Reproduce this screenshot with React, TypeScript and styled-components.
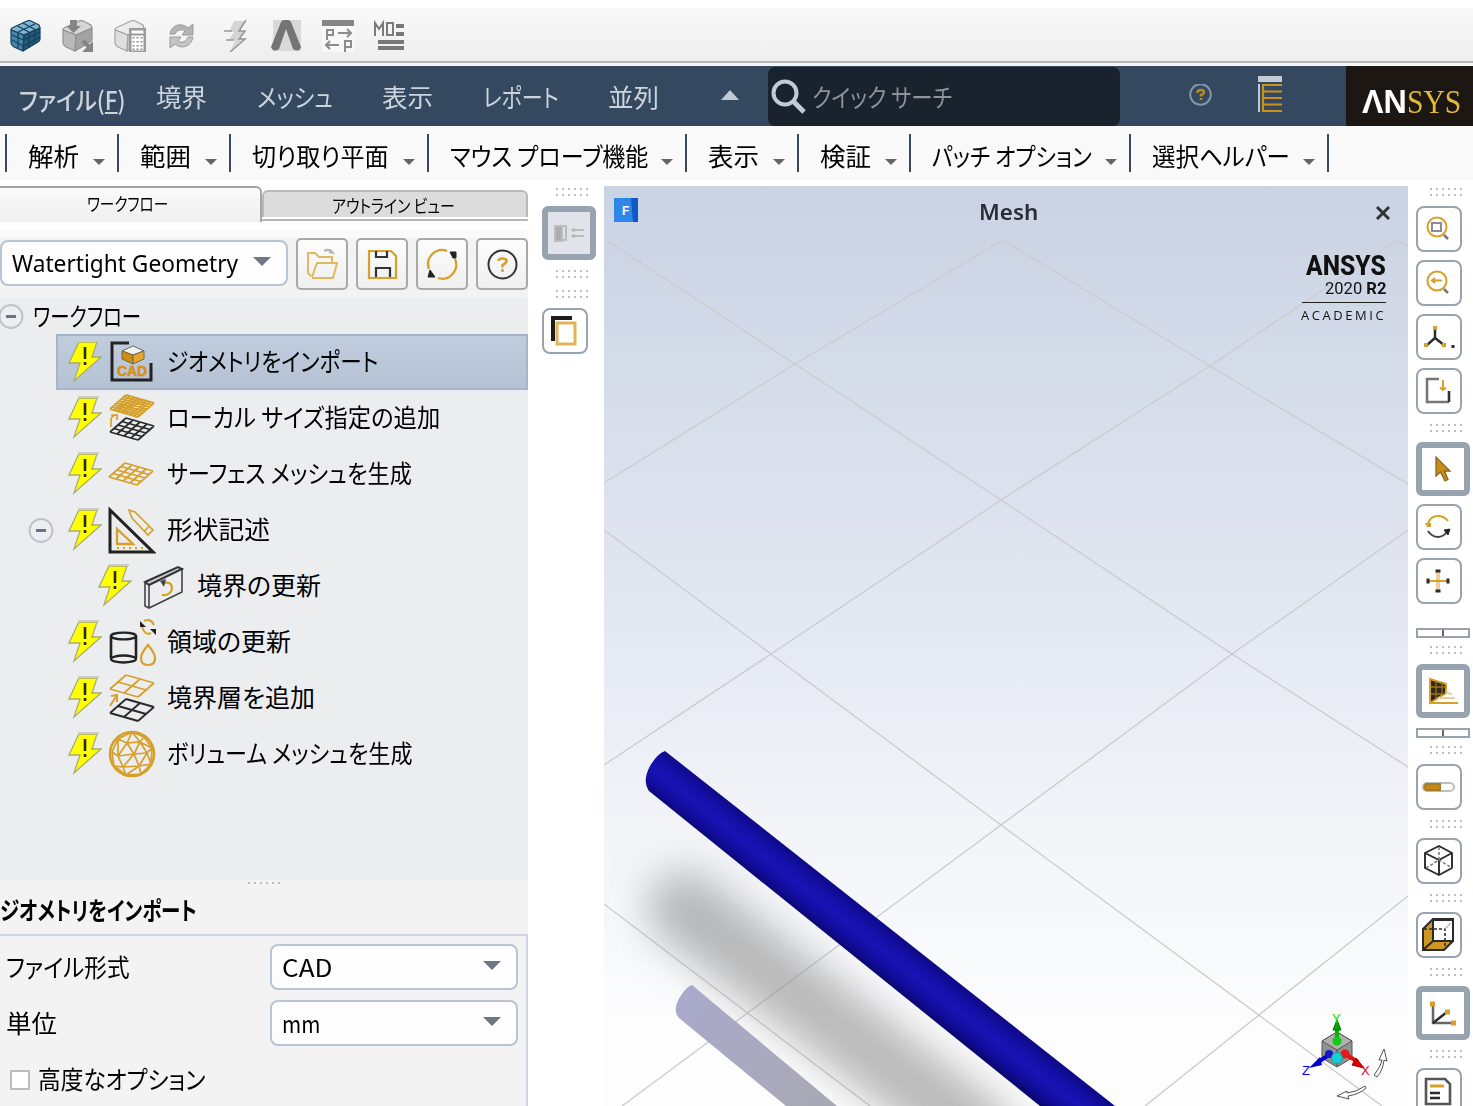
import React, { useLayoutEffect, useRef, useState } from "react";
import styled, { createGlobalStyle } from "styled-components";

const GOLD = "#d6a02a";
const INK = "#2b2b2b";

const GlobalStyle = createGlobalStyle`
  * { box-sizing: border-box; }
  body { margin: 0; background: #fff; overflow: hidden; }
`;

const Window = styled.div`
  width: 1473px;
  height: 1106px;
  overflow: hidden;
  display: flex;
  flex-direction: column;
  background: #fff;
  color: #000;
  font-family: "Noto Sans", "Noto Sans CJK JP", sans-serif;
  font-size: 25px;
`;

/* Text squeezed or stretched to a fixed advance width */
const FitBox = styled.span<{ $w: number; $size: number; $lh: number; $color?: string; $weight?: number; $font?: string; $gap?: number; $dy?: number; $spacing?: number }>`
  display: block;
  flex: none;
  width: ${p => p.$w}px;
  height: ${p => Math.round(p.$size * p.$lh)}px;
  line-height: ${p => Math.round(p.$size * p.$lh)}px;
  margin-left: ${p => p.$gap ?? 0}px;
  margin-top: ${p => p.$dy ?? 0}px;
  font-size: ${p => p.$size}px;
  font-weight: ${p => p.$weight ?? 400};
  font-family: ${p => p.$font ?? '"Noto Sans CJK JP", sans-serif'};
  font-feature-settings: "palt";
  letter-spacing: ${p => p.$spacing ?? 0}px;
  color: ${p => p.$color ?? "inherit"};
  white-space: nowrap;
`;
const FitInner = styled.span`
  display: inline-block;
  vertical-align: top;
  transform-origin: 0 50%;
`;

type FitProps = { children: React.ReactNode; w: number; size?: number; lh?: number; color?: string; weight?: number; font?: string; gap?: number; dy?: number; spacing?: number };
function Fit({ children, w, size = 25, lh = 1.3, color, weight, font, gap, dy, spacing }: FitProps) {
  const ref = useRef<HTMLSpanElement>(null);
  const [k, setK] = useState(1);
  useLayoutEffect(() => {
    if (ref.current) setK(w / ref.current.offsetWidth);
  }, [w]);
  return (
    <FitBox $w={w} $size={size} $lh={lh} $color={color} $weight={weight} $font={font} $gap={gap} $dy={dy} $spacing={spacing}>
      <FitInner ref={ref} style={{ transform: `scaleX(${k})` }}>{children}</FitInner>
    </FitBox>
  );
}

/* ---------- top tool bar ---------- */
const IconBar = styled.header`
  flex: none;
  height: 58px;
  margin-top: 8px;
  padding: 12px 0 0 10px;
  display: flex;
  gap: 20px;
  background: linear-gradient(#f9f9f9, #eeeeee 53px, #b5b5b5 53px, #b5b5b5 55px, #f4f6f5 55px);
`;
const Svg = styled.svg`
  display: block;
  flex: none;
`;

const CubeShape = ({ a, b, c, s }: { a: string; b: string; c: string; s: string }) => (
  <g stroke={s} strokeWidth="1.2" strokeLinejoin="round">
    <path d="M1 10 Q1 8 4 7 L17 1 Q19 0 21 1 L29 5 L30 8 L14 15 Z" fill={a} />
    <path d="M1 10 L14 15 L13 31 L4 27 Q1 25 1 23 Z" fill={b} />
    <path d="M14 15 L30 8 V19 Q30 21 28 22 L13 31 Z" fill={c} />
  </g>
);

function TopIcons() {
  return (
    <IconBar>
      <Svg width="32" height="32" viewBox="0 0 32 32">
        <CubeShape a="#7db4d4" b="#4586aa" c="#225a7c" s="#173f58" />
        <path d="M7.5 6 L19 12 M13 3 L25 9.5 M8 12 L8 28 M2 15 L13.5 20 M2 20 L13.5 26 M19 12 V27 M25 9.5 V24 M14 20 L30 12 M14 26 L30 17 M8 12 L25 4" stroke="#173f58" strokeWidth="1.2" fill="none" />
      </Svg>
      <Svg width="32" height="32" viewBox="0 0 32 32">
        <CubeShape a="#d6d6d6" b="#b9b9b9" c="#a2a2a2" s="#929292" />
        <path d="M8 0 h7 v6 h4 l-7.5 7 l-7 -7 h3.500 Z" fill="#858585" />
        <path d="M21 21 L28 28" stroke="#858585" strokeWidth="4" />
        <path d="M31 21 V32 H20 Z" fill="#858585" />
      </Svg>
      <Svg width="32" height="32" viewBox="0 0 32 32">
        <CubeShape a="#ececec" b="#dedede" c="#c4c4c4" s="#a3a3a3" />
        <rect x="15" y="8" width="17" height="24" fill="#9a9a9a" />
        <rect x="17.500" y="10.500" width="12" height="3" fill="#fff" />
        <rect x="17.500" y="15.500" width="12" height="15" fill="#fff" />
        <g fill="#8c8c8c">
          {[17, 21, 25, 28.5].map(y => [18.500, 22.500, 26.500].map(x => <rect key={`${x}-${y}`} x={x} y={y} width="2" height="1.500" />))}
        </g>
      </Svg>
      <Svg width="32" height="32" viewBox="0 0 32 32">
        <path d="M4 14 C6 3 17 3 22 8 L27 4 V15 H16 L19 11 C14 8 11 11 9 14 Z" fill="#b4b4b4" stroke="#9c9c9c" />
        <path d="M27 17 C25 28 14 29 9 24 L4 28 V17 H15 L12 21 C17 24 20 21 22 17 Z" fill="#c4c4c4" stroke="#9c9c9c" />
      </Svg>
      <Svg width="32" height="32" viewBox="0 0 32 32">
        <path d="M16 1 H27 L21 11 H27 L20 18 H26 L13 31 L17 20 H11 L16 12 H11 Z" fill="#d4d4d4" />
        <path d="M28 0 L21 11 H27 L21 19 H27 L12 32 M6 11 h8 M8 20 h8" stroke="#999" strokeWidth="1.600" fill="none" />
      </Svg>
      <Svg width="32" height="32" viewBox="0 0 32 32">
        <rect x="3" y="0" width="28" height="31" fill="#d9d9d9" />
        <path d="M1 27 L11 2 Q12 0 14 0 H18 Q20 0 21 2 L31 27 Q29 33 23 29 L16 9 L9 29 Q3 33 1 27 Z" fill="#747474" />
      </Svg>
      <Svg width="32" height="32" viewBox="0 0 32 32">
        <rect x="0" y="0" width="32" height="32" fill="#f8f8f8" />
        <rect x="0" y="0" width="32" height="6" fill="#858585" />
        <path d="M5 20 V10 H11 V15 H5 M16 13 H29 M25 9 L29 13 L25 17 M17 25 H4 M8 21 L4 25 L8 29 M23 32 V21 H29 V27 H23" stroke="#8c8c8c" strokeWidth="2" fill="none" />
      </Svg>
      <Svg width="32" height="32" viewBox="0 0 32 32">
        <path d="M1 16 V3 L5 9 L9 3 V16 M13 3 H19 V15 H13 Z" stroke="#7b7b7b" strokeWidth="2" fill="none" />
        <path d="M22 4 h8 v4 h-8 z M22 12 h8 v4 h-8 z M4 20 h26 v4 h-26 z M4 26 h26 v4 h-26 z" fill="#777" />
      </Svg>
    </IconBar>
  );
}

/* ---------- menu bar ---------- */
const MenuBar = styled.nav`
  flex: none;
  height: 60px;
  display: flex;
  align-items: center;
  background: #34495f;
  color: #cdd4dd;
`;
const Up = styled.i`
  flex: none;
  margin-left: 62px;
  margin-top: -2px;
  border: 9px solid transparent;
  border-top: 0;
  border-bottom: 10px solid #c1cbd8;
`;
const Search = styled.div`
  flex: none;
  width: 352px;
  height: 59px;
  margin-left: 29px;
  padding-left: 3px;
  display: flex;
  align-items: center;
  border-radius: 7px;
  background: #19232d;
`;
const MenuIcon = styled.div<{ $gap: number }>`
  margin-left: ${p => p.$gap}px;
`;
const Brand = styled.div`
  margin-left: auto;
  width: 127px;
  height: 60px;
  padding: 11px 0 0 16px;
  display: flex;
  align-items: center;
  background: #1c1713;
`;

function Menu() {
  return (
    <MenuBar>
      <Fit w={107} gap={19} dy={6} weight={500}>ファイル(<u>F</u>)</Fit>
      <Fit w={51} gap={30}>境界</Fit>
      <Fit w={76} gap={50}>メッシュ</Fit>
      <Fit w={51} gap={49}>表示</Fit>
      <Fit w={76} gap={50}>レポート</Fit>
      <Fit w={51} gap={49}>並列</Fit>
      <Up />
      <Search>
        <Svg width="36" height="36" viewBox="0 0 36 36">
          <circle cx="14" cy="15" r="11.500" fill="none" stroke="#c1cbd8" strokeWidth="4" />
          <path d="M22 23 L33 34" stroke="#c1cbd8" strokeWidth="5" />
        </Svg>
        <Fit w={140} gap={5} color="#8f9398">クイック サーチ</Fit>
      </Search>
      <MenuIcon $gap={69}>
        <Svg width="23" height="24" viewBox="0 0 23 24">
          <circle cx="11.500" cy="10.500" r="10.300" fill="none" stroke="#8294a8" strokeWidth="2" />
          <path d="M8.500 9 Q8.500 6 11.500 6 Q15 6 15 8.500 Q14.500 10.500 12 11 V12.500 M12 14 v2" stroke="#b78b26" strokeWidth="2.500" fill="none" />
        </Svg>
      </MenuIcon>
      <MenuIcon $gap={46}>
        <Svg width="25" height="40" viewBox="0 0 25 40">
          <path d="M0 0 H24 V6 H0 Z M0 8 H2 V36 H0 Z" fill="#c1cbd8" />
          <path d="M24 9 H5 V35 H24 M5 15.500 H24 M5 22 H24 M5 28.500 H24" stroke="#cb9216" strokeWidth="2.200" fill="none" />
        </Svg>
      </MenuIcon>
      <Brand>
        <Fit w={45} size={33} weight={700} color="#fff" font='"Liberation Sans", sans-serif'>ΛN</Fit>
        <Fit w={54} size={34} color="#e2b93a" font='"Liberation Serif", serif'>SYS</Fit>
      </Brand>
    </MenuBar>
  );
}

const SubBar = styled.div`
  flex: none;
  height: 54px;
  padding: 8px 0 0 5px;
  display: flex;
  background: #f9f9f9;
`;
const SubItem = styled.div<{ $w: number }>`
  width: ${p => p.$w}px;
  height: 38px;
  padding: 0 12px 0 21px;
  display: flex;
  align-items: center;
  justify-content: space-between;
  border-left: 2px solid #3a4a5c;
`;
const SubEnd = styled.div`
  width: 2px;
  height: 38px;
  background: #3a4a5c;
`;
const Down = styled.i<{ $big?: boolean }>`
  flex: none;
  margin-top: ${p => (p.$big ? 0 : 18)}px;
  border: ${p => (p.$big ? 9 : 6)}px solid transparent;
  border-bottom: 0;
  border-top: ${p => (p.$big ? "9px solid #6e7783" : "6px solid #666")};
`;
const subItems: [string, number, number][] = [
  ["解析", 112, 51], ["範囲", 112, 51], ["切り取り平面", 198, 137], ["マウス プローブ機能", 258, 198],
  ["表示", 112, 51], ["検証", 112, 51], ["パッチ オプション", 220, 160], ["選択ヘルパー", 198, 138],
];

/* ---------- left panel ---------- */
const Body = styled.main`
  flex: 1;
  min-height: 0;
  display: flex;
`;
const Left = styled.section`
  flex: none;
  width: 528px;
  display: flex;
  flex-direction: column;
`;
const Tabs = styled.div`
  height: 50px;
  padding-top: 6px;
  display: flex;
  align-items: flex-start;
`;
const Tab = styled.div<{ $on?: boolean }>`
  width: ${p => (p.$on ? 262 : 266)}px;
  height: ${p => (p.$on ? 36 : 27)}px;
  margin-top: ${p => (p.$on ? 0 : 4)}px;
  border: solid ${p => (p.$on ? "#a5a5a5" : "#b9b9b9")};
  border-width: ${p => (p.$on ? "2px 2px 0 0" : "2px 2px 0 2px")};
  border-radius: ${p => (p.$on ? "0 6px 0 0" : "6px 6px 0 0")};
  background: ${p => (p.$on ? "linear-gradient(#fafafa,#efefef)" : "#dcdcdc")};
  box-shadow: ${p => (p.$on ? "none" : "0 2px #fff, 0 4px #b5b5b5")};
  padding-left: ${p => (p.$on ? 87 : 68)}px;
  display: flex;
  align-items: center;
`;
const Tools = styled.div`
  height: 68px;
  padding-top: 8px;
  display: flex;
  align-items: flex-start;
  background: linear-gradient(#fafafa 8px, #f3f3f3 8px);
`;
const Combo = styled.div<{ $w: number }>`
  flex: none;
  width: ${p => p.$w}px;
  height: 46px;
  padding: 0 15px 3px 10px;
  display: flex;
  align-items: center;
  justify-content: space-between;
  border: 2px solid #b8c4d4;
  border-radius: 8px;
  background: #fdfdfd;
`;
const ToolCombo = styled.div`
  margin-top: 2px;
`;
const ToolButton = styled.div`
  width: 52px;
  height: 52px;
  margin-left: 8px;
  display: flex;
  align-items: center;
  justify-content: center;
  border: 2px solid #a9a9a9;
  border-radius: 5px;
  background: linear-gradient(#fdfdfd, #efefef);
`;
const Tree = styled.div`
  height: 582px;
  background: #ecedef;
`;
const Root = styled.div`
  height: 36px;
  margin-left: -2px;
  display: flex;
  align-items: center;
`;
const Row = styled.div<{ $on?: boolean; $indent?: number }>`
  height: 56px;
  margin-left: ${p => (p.$on ? 56 : 0)}px;
  padding-left: ${p => (p.$on ? 10 : 28 + (p.$indent ?? 0))}px;
  display: flex;
  align-items: center;
  border: ${p => (p.$on ? "2px solid #a5b4c6" : "0")};
  background: ${p => (p.$on ? "linear-gradient(#c0cddd,#b4c2d4)" : "none")};
`;
const Fold = styled.span<{ $show: boolean }>`
  flex: none;
  width: 26px;
  height: 26px;
  margin-right: 14px;
  visibility: ${p => (p.$show ? "visible" : "hidden")};
`;

const FoldIcon = ({ show = true }: { show?: boolean }) => (
  <Fold $show={show}>
    <Svg width="26" height="26" viewBox="0 0 26 26">
      <circle cx="13" cy="13.500" r="11.500" fill="#eceef0" stroke="#bcc3cc" strokeWidth="2" />
      <path d="M8 13.500 H18" stroke="#64758a" strokeWidth="3" />
    </Svg>
  </Fold>
);
const Bolt = () => (
  <Svg width="34" height="44" viewBox="0 0 34 44">
    <path d="M11 2 H29 L24 17 H33 L6 41 L12 23 H1 Z" fill="#ff0" stroke="#a9ad6c" strokeWidth="1.300" />
    <path d="M10.500 1 H31" stroke="#c9ccc9" strokeWidth="2" />
    <path d="M17 7 V19 M17 22 v3" stroke="#2a2a10" strokeWidth="2.600" />
  </Svg>
);

const Sheet = ({ y, n, c, w = 1.5 }: { y: number; n: number; c: string; w?: number }) => {
  const lines = [];
  for (let i = 0; i <= n; i++) {
    const t = i / n;
    lines.push(`M${18 - 16 * t} ${y + 14 * t} L${46 - 16 * t} ${y + 8 + 14 * t}`);
    lines.push(`M${18 + 28 * t} ${y + 8 * t} L${2 + 28 * t} ${y + 14 + 8 * t}`);
  }
  return <path d={lines.join(" ")} stroke={c} strokeWidth={w} fill="none" />;
};

const rowIcons: Record<string, React.ReactNode> = {
  cad: (
    <>
      <path d="M21 6 H4 V43 H43 V26" stroke="#222" strokeWidth="3" fill="none" />
      <path d="M14 14 L25 9 L36 14 L25 18 Z" fill="#f2f2f2" stroke="#666" />
      <path d="M14 14 L25 18 V27 L14 22 Z" fill="#d08d12" stroke="#7b6844" />
      <path d="M25 18 L36 14 V22 L25 27 Z" fill="#e3a72d" stroke="#7b6844" />
      <text x="9" y="39" fontFamily="Liberation Sans" fontWeight="700" fontSize="14" textLength="30" fill="#d69114" stroke="#d69114" strokeWidth=".5">CAD</text>
    </>
  ),
  local: (
    <>
      <Sheet y={2} n={7} c={GOLD} w={1.9} />
      <Sheet y={25} n={4} c={INK} w={1.8} />
      <path d="M3 34 V27 Q3 23 8 22 M3 22 h6 v5" stroke={GOLD} strokeWidth="1.700" fill="none" />
    </>
  ),
  surface: <g transform="translate(-1 1)"><Sheet y={13} n={4} c={GOLD} w={1.8} /></g>,
  describe: (
    <>
      <path d="M2 5 V47 H45 Z" stroke="#222" strokeWidth="3" fill="none" />
      <path d="M9 24 V39 H25 Z" stroke={GOLD} strokeWidth="2.300" fill="none" />
      <path d="M9 43 H38" stroke={GOLD} strokeWidth="2" strokeDasharray="2 4" />
      <path d="M21 5 L27 7 L45 25 L40 30 L24 13 Z M41 21 L37 26" stroke={GOLD} strokeWidth="1.600" fill="none" />
    </>
  ),
  boundary: (
    <>
      <path d="M11 25 V47 M7 22 V45 L11 47 L44 31 V7" stroke="#444" strokeWidth="1.600" fill="none" />
      <path d="M7 21 L40 6 L44 8 L11 24 Z" stroke="#333" strokeWidth="2" fill="#ccc" />
      <path d="M26 22 Q34 20 34 28 Q32 35 24 34" stroke={GOLD} strokeWidth="2.200" fill="none" />
      <path d="M28 18 L22 20 L26 26 Z" fill="#444" />
    </>
  ),
  region: (
    <>
      <ellipse cx="15.500" cy="19" rx="12.500" ry="3.300" fill="none" stroke="#222" strokeWidth="2.300" />
      <path d="M3 19 V41 M28 19 V41" stroke="#222" strokeWidth="2.600" />
      <ellipse cx="15.500" cy="42" rx="12.500" ry="3.500" fill="none" stroke="#222" strokeWidth="2.300" />
      <path d="M40 28 Q33 36 33 41 Q33 48 40 48 Q47 48 47 41 Q47 36 40 28 Z" stroke={GOLD} strokeWidth="2.200" fill="none" />
      <path d="M36 4 Q43 1 46 8 M34 10 Q37 19 43 16" stroke={GOLD} strokeWidth="2" fill="none" />
      <path d="M32 4 v6 h6 z M48 18 v-6 h-6 z" fill="#222" />
    </>
  ),
  layer: (
    <>
      <Sheet y={2} n={2} c={GOLD} w={1.8} />
      <Sheet y={26} n={2} c={INK} w={1.9} />
      <path d="M2 33 L9 22 M3 23 L9 22 V29" stroke={GOLD} strokeWidth="2" fill="none" />
    </>
  ),
  volume: (
    <g stroke={GOLD} fill="none" strokeWidth="1.700" transform="translate(0 1)">
      <circle cx="24" cy="24" r="22" strokeWidth="2.600" />
      <path d="M24 2 L10 9 L4 22 L6 36 L18 45 L33 44 L43 34 L44 18 L36 7 Z M24 2 L19 13 L10 9 L10 26 L4 22 M24 2 L32 12 L36 7 M19 13 L32 12 L39 23 L44 18 M19 13 L10 26 L15 37 L6 36 M19 13 L26 24 L32 12 M10 26 L26 24 L39 23 M26 24 L15 37 L18 45 M26 24 L31 36 L15 37 M31 36 L39 23 L43 34 L31 36 L33 44 M31 36 L18 45 M32 12 L44 18" />
    </g>
  ),
};

const rows: { icon: string; text: string; w: number; on?: boolean; fold?: boolean; indent?: number }[] = [
  { icon: "cad", text: "ジオメトリをインポート", w: 211, on: true },
  { icon: "local", text: "ローカル サイズ指定の追加", w: 273 },
  { icon: "surface", text: "サーフェス メッシュを生成", w: 245 },
  { icon: "describe", text: "形状記述", w: 103, fold: true },
  { icon: "boundary", text: "境界の更新", w: 124, indent: 30 },
  { icon: "region", text: "領域の更新", w: 124 },
  { icon: "layer", text: "境界層を追加", w: 148 },
  { icon: "volume", text: "ボリューム メッシュを生成", w: 246 },
];

const RowGlyph = styled.div`
  margin: 0 11px 0 6px;
`;

const Details = styled.div`
  flex: 1;
  overflow: hidden;
  background: #f3f3f3;
`;
const Grip = styled.div<{ $rows: number }>`
  flex: none;
  width: 34px;
  height: ${p => (p.$rows === 2 ? 8 : 2)}px;
  background: repeating-linear-gradient(90deg, #bdbdbd 0 2px, transparent 2px 6px);
  ${p => p.$rows === 2 && "mask-image: linear-gradient(#000 2px, transparent 2px 6px, #000 6px);"}
`;
const GripRow = styled.div`
  padding: 2px 0 0 248px;
`;
const Title = styled.div`
  height: 50px;
  display: flex;
  align-items: center;
`;
const Form = styled.div`
  height: 180px;
  padding: 8px 8px 0 0;
  border: solid #cfd5e4;
  border-width: 2px 2px 0 0;
`;
const Field = styled.div`
  height: 46px;
  margin-bottom: 10px;
  padding-left: 6px;
  display: flex;
  align-items: center;
  justify-content: space-between;
`;
const Check = styled.div`
  height: 46px;
  padding-left: 10px;
  display: flex;
  align-items: center;
`;
const Box = styled.span`
  width: 20px;
  height: 20px;
  margin-top: 2px;
  border: 2px solid #bdbdbd;
  background: #fff;
`;

function LeftPanel() {
  return (
    <Left>
      <Tabs>
        <Tab $on><Fit w={81} size={18} dy={-3}>ワークフロー</Fit></Tab>
        <Tab><Fit w={123} size={18} dy={1}>アウトライン ビュー</Fit></Tab>
      </Tabs>
      <Tools>
        <ToolCombo>
          <Combo $w={288}>
            <Fit w={226} size={24} font='"Noto Sans", sans-serif' dy={2}>Watertight Geometry</Fit>
            <Down $big />
          </Combo>
        </ToolCombo>
        <ToolButton>
          <Svg width="34" height="34" viewBox="0 0 34 34" fill="none" stroke="#e2b85e" strokeWidth="2">
            <path d="M6 29 L3 26 V6 H10 L14 10 H27 V15 M7 31 H28 L32 16 H12 L7 30" />
            <path d="M19 4 Q25 1 28 6 L24 5" stroke="#b5b5b5" />
          </Svg>
        </ToolButton>
        <ToolButton>
          <Svg width="34" height="34" viewBox="0 0 34 34" fill="none" stroke={GOLD} strokeWidth="2.200">
            <path d="M4 4 H26 L31 9 V31 H4 Z" />
            <path d="M11 4 V10 H22 V4 M11 30 V21 H25 V30" stroke="#333" />
          </Svg>
        </ToolButton>
        <ToolButton>
          <Svg width="34" height="34" viewBox="0 0 34 34" fill="none" stroke={GOLD} strokeWidth="2.200">
            <path d="M4 22 A14 14 0 0 1 22 4 M30 12 A14 14 0 0 1 13 31" />
            <path d="M25 5 h6 v6 h-3 z M3 30 h7 l-5 -7 z" fill="#222" stroke="#222" strokeWidth="1" />
          </Svg>
        </ToolButton>
        <ToolButton>
          <Svg width="34" height="34" viewBox="0 0 34 34" fill="none">
            <circle cx="17.500" cy="17.500" r="14" stroke="#333" strokeWidth="2" />
            <path d="M13.500 14 Q13.500 11.500 17.500 11.500 Q21.500 11.500 21.500 14 Q21.500 16 17.500 18 V20.500 M17.500 22 v3" stroke={GOLD} strokeWidth="2.500" />
          </Svg>
        </ToolButton>
      </Tools>
      <Tree>
        <Root>
          <FoldIcon />
          <Fit w={108} gap={-5} dy={-2}>ワークフロー</Fit>
        </Root>
        {rows.map(r => (
          <Row key={r.text} $on={r.on} $indent={r.indent}>
            {!r.on && <FoldIcon show={!!r.fold} />}
            <Bolt />
            <RowGlyph><Svg width="48" height="50" viewBox="0 0 48 50">{rowIcons[r.icon]}</Svg></RowGlyph>
            <Fit w={r.w} dy={-3}>{r.text}</Fit>
          </Row>
        ))}
      </Tree>
      <Details>
        <GripRow><Grip $rows={1} /></GripRow>
        <Title><Fit w={197} weight={600}>ジオメトリをインポート</Fit></Title>
        <Form>
          <Field><Fit w={124} dy={-1}>ファイル形式</Fit><Combo $w={248}><Fit w={50} size={24} dy={2}>CAD</Fit><Down $big /></Combo></Field>
          <Field><Fit w={51} dy={-1}>単位</Fit><Combo $w={248}><Fit w={38} size={24} dy={2}>mm</Fit><Down $big /></Combo></Field>
          <Check><Box /><Fit w={167} gap={8} dy={-2}>高度なオプション</Fit></Check>
        </Form>
      </Details>
    </Left>
  );
}

/* ---------- side tool columns ---------- */
const Side = styled.aside<{ $ml: number }>`
  flex: none;
  width: 54px;
  margin-left: ${p => p.$ml}px;
  padding-top: 8px;
  display: flex;
  flex-direction: column;
`;
const SideGrip = styled.div<{ $mb: number }>`
  padding-left: 14px;
  margin-bottom: ${p => p.$mb}px;
`;
const SideButton = styled.div<{ $big?: boolean; $mb?: number; $dim?: boolean }>`
  flex: none;
  width: ${p => (p.$big ? 54 : 46)}px;
  height: ${p => (p.$big ? 54 : 46)}px;
  margin-bottom: ${p => p.$mb ?? 8}px;
  display: flex;
  align-items: center;
  justify-content: center;
  border: ${p => (p.$big ? 6 : 2)}px solid #97a4b0;
  border-radius: ${p => (p.$big ? 6 : 8)}px;
  background: ${p => (p.$dim ? "#e0e3e9" : "#fff")};
`;
const Splitter = styled.div<{ $mb: number }>`
  flex: none;
  height: 10px;
  margin-bottom: ${p => p.$mb}px;
  border: 2px solid #97a4b0;
  background: linear-gradient(90deg, #fff 24px, #666 24px 26px, #fff 26px);
`;
const G = ({ children }: { children: React.ReactNode }) => (
  <Svg width="36" height="36" viewBox="0 0 36 36" fill="none" strokeWidth="2" stroke={INK}>{children}</Svg>
);

function MiddleTools() {
  return (
    <Side $ml={14}>
      <SideGrip $mb={10}><Grip $rows={2} /></SideGrip>
      <SideButton $big $dim $mb={10}>
        <G>
          <path d="M4 11 h7 v15 h-7 z" fill="#adadad" stroke="#bcbcbc" />
          <path d="M12 11 H15 V25 H12 M20 15 H33 M20 21 H33 M23 13 v4 M23 19 v4" stroke="#bbb" />
        </G>
      </SideButton>
      <SideGrip $mb={12}><Grip $rows={2} /></SideGrip>
      <SideGrip $mb={10}><Grip $rows={2} /></SideGrip>
      <SideButton>
        <G>
          <path d="M6 28 V5 H25" stroke="#1c1c1c" strokeWidth="4" />
          <path d="M10 10 H28 V31 H10 Z" stroke="#e0b558" strokeWidth="3" fill="#fff" />
        </G>
      </SideButton>
    </Side>
  );
}

function RightTools() {
  return (
    <Side $ml={8}>
      <SideGrip $mb={10}><Grip $rows={2} /></SideGrip>
      <SideButton><G><circle cx="16" cy="16" r="9.500" stroke={GOLD} /><path d="M11 12 H20 V20 H11 Z" stroke="#8b8b95" /><path d="M23 24 L27 28" stroke="#777" strokeWidth="2.500" /></G></SideButton>
      <SideButton><G><circle cx="16" cy="16" r="9.500" stroke={GOLD} /><path d="M11 15.500 H21 M14 13 L11 15.500 L14 18" stroke={GOLD} /><path d="M23 24 L27 28" stroke="#777" strokeWidth="2.500" /></G></SideButton>
      <SideButton><G><path d="M14 9 V19 L6 26 M14 19 L23 26" strokeWidth="2.500" /><path d="M12 9 h4 M3 26 h4 M21 26 h4" stroke={GOLD} strokeWidth="4" /><path d="M30.500 27.500 h3" strokeWidth="3" /></G></SideButton>
      <SideButton $mb={10}><G><path d="M18 6 H6 V29 H28" stroke="#777" strokeWidth="2.600" /><path d="M28 18 V29" stroke="#333" strokeWidth="2.600" /><path d="M22 7 V17 M19 14.500 L22 17 L25 14.500" stroke={GOLD} /></G></SideButton>
      <SideGrip $mb={10}><Grip $rows={2} /></SideGrip>
      <SideButton $big><G><path d="M11 6 V25 L15.500 21 L20 30 L23 28.500 L19.500 20 H25 Z" fill="#c78d16" stroke="#8a661e" strokeWidth="1.300" /></G></SideButton>
      <SideButton><G><path d="M7 15 Q9 7 17 7 Q23 7 27 12" stroke={GOLD} strokeWidth="2" /><path d="M4 14 h6 v4 h-4 z" fill={GOLD} stroke="none" /><path d="M7 22 Q11 28 17 28 Q22 28 26 23" stroke="#444" strokeWidth="2" /><path d="M23 21 L29 20 L27 26 Z" fill="#222" strokeWidth="1" /></G></SideButton>
      <SideButton $mb={24}><G><path d="M17 8 V28" stroke="#ead19c" strokeWidth="4" /><path d="M7 18 H27" stroke={GOLD} /><path d="M14.500 8 h5 M14.500 28 h5" strokeWidth="3" /><path d="M7 15.500 v5 M27 15.500 v5" strokeWidth="3" /></G></SideButton>
      <Splitter $mb={8} />
      <SideGrip $mb={10}><Grip $rows={2} /></SideGrip>
      <SideButton $big $mb={10}><G><path d="M5 6 L21 11 V20 L5 30 Z" fill="#302810" stroke={GOLD} /><path d="M6 14 H21 M6 21 H20 M11 8 V26 M17 9 V22" stroke="#9b741e" strokeWidth="1.300" /><path d="M21 18 L25 21 H27 M13 25 H30" stroke="#ead19c" /><path d="M5 30 H33" stroke={GOLD} /></G></SideButton>
      <Splitter $mb={8} />
      <SideGrip $mb={10}><Grip $rows={2} /></SideGrip>
      <SideButton $mb={10}><G><rect x="2" y="14" width="31" height="8" rx="4" stroke="#bdbdbd" strokeWidth="2" fill="#fff" /><path d="M5 15 H19 V21 H5 Q2 18 5 15 Z" fill="#c58a12" stroke="#a87c24" /></G></SideButton>
      <SideGrip $mb={10}><Grip $rows={2} /></SideGrip>
      <SideButton $mb={10}><G><path d="M18 3 L31 10 V25 L18 32 L4 25 V10 Z M4 10 L18 17 L31 10 M18 17 V32" strokeWidth="1.900" /><path d="M18 4 V17 M5 25 L18 17 L31 25" stroke="#777" strokeWidth="1.500" strokeDasharray="3 2" /></G></SideButton>
      <SideGrip $mb={10}><Grip $rows={2} /></SideGrip>
      <SideButton $mb={10}><G><path d="M2 12 L12 2 H32 V24 L23 33 H2 Z" fill="#cf9622" /><path d="M12 3 H32 V24 H12 Z" fill="#fff" /><path d="M12 24 L2 33" /><path d="M3 12 H24 V32" strokeDasharray="3 2" strokeWidth="1.600" /><path d="M24 12 L30 6" stroke="#bbb" strokeWidth="1.500" /></G></SideButton>
      <SideGrip $mb={10}><Grip $rows={2} /></SideGrip>
      <SideButton $big $mb={10}><G><path d="M8 10 V28 H28" stroke="#666" strokeWidth="2.500" /><path d="M8 28 L22 17" strokeWidth="2.500" /><path d="M5 9 h5 M20 17 h5 M26 28 h5" stroke={GOLD} strokeWidth="5" /></G></SideButton>
      <SideGrip $mb={10}><Grip $rows={2} /></SideGrip>
      <SideButton><G><path d="M5 31 V6 H24 L29 11 V31 Z" stroke="#555" strokeWidth="2.600" /><path d="M9 13 H23" stroke={GOLD} strokeWidth="3" /><path d="M9 20 H19 M9 25 H19" strokeWidth="2.300" /></G></SideButton>
    </Side>
  );
}

/* ---------- mesh viewport ---------- */
const Viewport = styled.section`
  position: relative;
  flex: none;
  width: 804px;
  height: 920px;
  margin: 6px 0 0 8px;
  overflow: hidden;
  background: linear-gradient(#cad3e4, #dfe4ef 40%, #f2f4f8 70%, #fdfdfe 92%);
`;
const Scene = styled.svg`
  position: absolute;
  inset: 0;
`;
const ViewHead = styled.div`
  position: relative;
  height: 52px;
  padding: 0 17px 0 10px;
  display: flex;
  align-items: center;
  justify-content: space-between;
  color: #2c2c36;
`;
const AppBadge = styled.div`
  margin-top: -4px;
  padding-right: 4px;
`;
const Stamp = styled.div`
  position: absolute;
  top: 66px;
  right: 22px;
  width: 84px;
  display: flex;
  flex-direction: column;
  align-items: flex-end;
  color: #111;
`;
const Rule = styled.div`
  width: 84px;
  height: 1px;
  margin: 4px 0 5px;
  background: #222;
`;

function View() {
  return (
    <Viewport>
      <Scene width="804" height="920" viewBox="604 186 804 920">
        <defs>
          <linearGradient id="tube" gradientUnits="userSpaceOnUse" x1="850" y1="897" x2="823" y2="931">
            <stop offset="0" stopColor="#0e0a86" />
            <stop offset=".25" stopColor="#140fa6" />
            <stop offset=".5" stopColor="#1813b4" />
            <stop offset=".8" stopColor="#120d9c" />
            <stop offset="1" stopColor="#0a0774" />
          </linearGradient>
          <linearGradient id="mirror" gradientUnits="userSpaceOnUse" x1="680" y1="1000" x2="810" y2="1106">
            <stop offset="0" stopColor="#a9a9cb" />
            <stop offset="1" stopColor="#a9a9b6" />
          </linearGradient>
          <filter id="soft" x="-30%" y="-30%" width="160%" height="160%"><feGaussianBlur stdDeviation="20" /></filter>
        </defs>
        <g stroke="#cbcbcd" strokeWidth="1.300" fill="none">
          <path d="M1003 240 L795 364 L604 483" />
          <path d="M1003 240 L1210 366 L1408 484" />
          <path d="M606 240 L795 364 L1001 500 L1232 654 L1408 767" />
          <path d="M1408 247 L1397 240 L1210 366 L1001 500 L771 654 L604 765" />
          <path d="M604 530 L771 654 L1001 825 L1294 1041 L1382 1106" />
          <path d="M1408 530 L1232 654 L1001 825 L622 1106" />
          <path d="M604 904 L870 1106" />
          <path d="M1408 896 L1145 1106" />
        </g>
        <path d="M684 908 L980 1135" stroke="#8c8c8c" strokeOpacity=".6" strokeWidth="74" strokeLinecap="round" filter="url(#soft)" />
        <path d="M692 985 L837 1106 H786 L679 1018 Q672 1010 680 997 Q687 986 692 985 Z" fill="url(#mirror)" />
        <path d="M665 751 L1115 1106 H1040 L649 791 Q642 781 650 766 Q657 754 665 751 Z" fill="url(#tube)" />
        <g strokeLinejoin="round">
          <path d="M1322 1041 L1337 1032 L1352 1041 V1058 L1337 1067 L1322 1058 Z" fill="#929292" stroke="#555" />
          <path d="M1322 1041 L1337 1050 L1352 1041 L1337 1032 Z" fill="#b0b0b0" stroke="#555" />
          <path d="M1337 1050 V1067" stroke="#555" />
          <path d="M1337 1040 V1029" stroke="#00b900" strokeWidth="4" />
          <path d="M1333 1030 L1337 1020 L1341 1030 Z" fill="#00a900" stroke="#006b00" />
          <circle cx="1337" cy="1041" r="4.500" fill="#0dcc13" />
          <path d="M1329 1055 L1318 1062" stroke="#0000cf" strokeWidth="4" />
          <path d="M1320 1057 L1309 1068 L1322 1065 Z" fill="#0000c9" />
          <path d="M1345 1054 L1358 1062" stroke="#df1010" strokeWidth="4" />
          <path d="M1356 1058 L1364 1068 L1352 1065 Z" fill="#d00" stroke="#900" />
          <circle cx="1329" cy="1054" r="4" fill="#1616cd" />
          <circle cx="1345" cy="1054" r="4.500" fill="#e81818" />
          <circle cx="1337" cy="1058" r="5.500" fill="#16d0d2" stroke="#099" strokeWidth=".7" />
          <g fontFamily="Liberation Sans" fontSize="13">
            <text x="1332" y="1023" fill="#00e400">Y</text>
            <text x="1302" y="1075" fill="#0000ed">Z</text>
            <text x="1361" y="1075" fill="#f00000">X</text>
          </g>
          <path d="M1374 1075 Q1381 1066 1382 1060 L1379 1060 L1384 1049 L1387 1061 L1384 1060 Q1383 1070 1377 1077 Z" fill="#fff" stroke="#555" />
          <path d="M1365 1086 Q1357 1092 1347 1093 L1347 1091 L1337 1096 L1349 1099 L1348 1096 Q1360 1094 1366 1088 Z" fill="#fff" stroke="#555" />
        </g>
      </Scene>
      <ViewHead>
        <AppBadge>
          <Svg width="24" height="24" viewBox="0 0 24 24">
            <rect width="24" height="24" fill="#2d86e8" />
            <path d="M17 0 H24 V24 H19 Z" fill="#1058c4" />
            <text x="8" y="17" fontFamily="Liberation Sans" fontWeight="700" fontSize="12" fill="#fff">F</text>
          </Svg>
        </AppBadge>
        <Fit w={59} size={22} weight={600} dy={-2} font='"Noto Sans", sans-serif'>Mesh</Fit>
        <Svg width="16" height="16" viewBox="0 0 16 16"><path d="M2 3 L14 15 M14 3 L2 15" stroke="#333" strokeWidth="3" /></Svg>
      </ViewHead>
      <Stamp>
        <Fit w={80} size={28} lh={0.97} weight={800} font='Roboto, sans-serif'>ANSYS</Fit>
        <Fit w={61} size={16} lh={1.2} font='Roboto, sans-serif'>2020 <b>R2</b></Fit>
        <Rule />
        <Fit w={85} size={12.5} lh={1.3} spacing={2.5} font='"Open Sans", sans-serif'>ACADEMIC</Fit>
      </Stamp>
    </Viewport>
  );
}

export default function App() {
  return (
    <Window>
      <GlobalStyle />
      <TopIcons />
      <Menu />
      <SubBar>
        {subItems.map(([t, w, tw], i) => (
          <SubItem key={i} $w={w}>
            <Fit w={tw} dy={4}>{t}</Fit>
            <Down />
          </SubItem>
        ))}
        <SubEnd />
      </SubBar>
      <Body>
        <LeftPanel />
        <MiddleTools />
        <View />
        <RightTools />
      </Body>
    </Window>
  );
}
